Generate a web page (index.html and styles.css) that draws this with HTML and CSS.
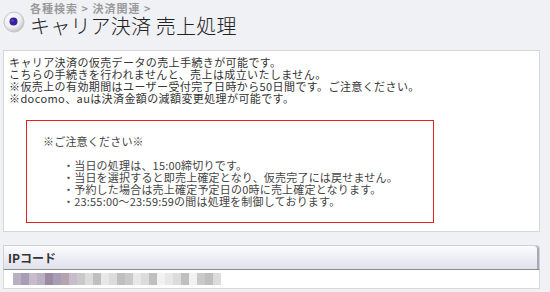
FILE: index.html
```html
<!DOCTYPE html>
<html lang="ja">
<head>
<meta charset="utf-8">
<link rel="stylesheet" href="styles.css">
</head>
<body>
<div class="page">
  <header class="head">
    <span class="bullet-icon">
      <svg width="22" height="22" viewBox="0 0 22 22">
        <defs>
          <radialGradient id="g" cx="40%" cy="35%" r="70%">
            <stop offset="0" stop-color="#ffffff"/>
            <stop offset="0.6" stop-color="#eeeef2"/>
            <stop offset="1" stop-color="#b8b8c2"/>
          </radialGradient>
        </defs>
        <circle cx="11" cy="11" r="10" fill="url(#g)" stroke="#c4c4cc" stroke-width="1"/>
        <circle cx="10.5" cy="10.5" r="4" fill="#3b1f9e"/>
        <circle cx="9.5" cy="9.5" r="1.5" fill="#5a40c0"/>
      </svg>
    </span>
    <div class="titles">
      <div class="crumbs">各種検索 &gt; 決済関連 &gt;</div>
      <h1 class="title">キャリア決済 売上処理</h1>
    </div>
  </header>

  <section class="box">
    <p class="intro">キャリア決済の仮売データの売上手続きが可能です。<br>こちらの手続きを行われませんと、売上は成立いたしません。<br>※仮売上の有効期間はユーザー受付完了日時から50日間です。ご注意ください。<br>※docomo、auは決済金額の減額変更処理が可能です。</p>
    <div class="notice">
      <p class="notice-title">※ご注意ください※</p>
      <ul class="notice-list">
        <li>・当日の処理は、15:00締切りです。</li>
        <li>・当日を選択すると即売上確定となり、仮売完了には戻せません。</li>
        <li>・予約した場合は売上確定予定日の0時に売上確定となります。</li>
        <li>・23:55:00～23:59:59の間は処理を制御しております。</li>
      </ul>
    </div>
  </section>

  <section class="field">
    <div class="field-head">IPコード</div>
    <div class="field-body">
      <div class="mosaic">
        <span class="m1"></span><span class="m2"></span><span class="m3"></span><span class="m1"></span><span class="m4"></span><span class="m2"></span><span class="m5"></span><span class="m3"></span><span class="m6"></span><span class="m7"></span><span class="m8"></span><span class="m9"></span><span class="m7"></span><span class="m8"></span><span class="m6"></span><span class="m9"></span><span class="m7"></span><span class="m8"></span><span class="m10"></span><span class="m9"></span><span class="m7"></span><span class="m8"></span><span class="m10"></span><span class="m6"></span><span class="m8"></span><span class="m7"></span>
      </div>
    </div>
  </section>
</div>
</body>
</html>
```
FILE: styles.css
```css
html, body {
  margin: 0;
  padding: 0;
  background: #f0f1f5;
}
body {
  font-family: "Noto Sans CJK JP", "Noto Sans", sans-serif;
  color: #333;
}
.page {
  width: 537px;
  padding: 2px 10px 0 3px;
}
.head {
  display: flex;
  align-items: flex-start;
  height: 48px;
}
.bullet-icon {
  display: block;
  width: 22px;
  height: 22px;
  margin-top: 9px;
  margin-right: 5px;
}
.bullet-icon svg {
  display: block;
}
.titles {
  display: flex;
  flex-direction: column;
}
.crumbs {
  font-size: 11px;
  line-height: 12px;
  font-weight: bold;
  color: #9a9a9a;
  letter-spacing: 1px;
}
.title {
  margin: 0;
  font-size: 20px;
  line-height: 23px;
  font-weight: 300;
  color: #222;
  letter-spacing: 0.2px;
}
.box {
  background: #fff;
  border: 1px solid #d6d6d6;
  padding: 5px 5px 8px 5px;
}
.intro {
  margin: 0;
  font-size: 11px;
  line-height: 12px;
  color: #333;
  letter-spacing: 0.4px;
}
.notice {
  width: 390px;
  margin: 16px 0 0 17px;
  border: 1px solid #e42020;
  padding: 14px 0 15px 16px;
  color: #444;
}
.notice-title {
  margin: 0;
  font-size: 11px;
  line-height: 12px;
  letter-spacing: 0.2px;
}
.notice-list {
  list-style: none;
  margin: 12px 0 0 0;
  padding: 0 0 0 20px;
  font-size: 11px;
  line-height: 12px;
  letter-spacing: 0.2px;
}
.field {
  margin-top: 13px;
}
.field-head {
  height: 23px;
  line-height: 23px;
  padding-left: 4px;
  font-size: 12px;
  font-weight: bold;
  color: #333;
  background: linear-gradient(#fbfcff, #e0e1ea);
  border: 1px solid #cfd0d8;
  border-bottom: 1px solid #8a8b92;
  border-top-right-radius: 4px;
  box-shadow: inset -2px 0 0 #a8a9b2;
}
.field-body {
  height: 19px;
  background: #fff;
  border: 1px solid #d8d8d8;
  border-top: 0;
  padding: 3px 0 0 9px;
  box-sizing: border-box;
}
.mosaic {
  display: flex;
  width: 208px;
  height: 12px;
}
.mosaic span {
  flex: 1;
  height: 12px;
}
.m1 { background: #b9b0c2; }
.m2 { background: #a99db6; }
.m3 { background: #c8bccb; }
.m4 { background: #9b8aa6; }
.m5 { background: #b6a3b0; }
.m6 { background: #c9c9c9; }
.m7 { background: #dcdcdc; }
.m8 { background: #bfbfbf; }
.m9 { background: #e8e8e8; }
.m10 { background: #f2f2f2; }
```
